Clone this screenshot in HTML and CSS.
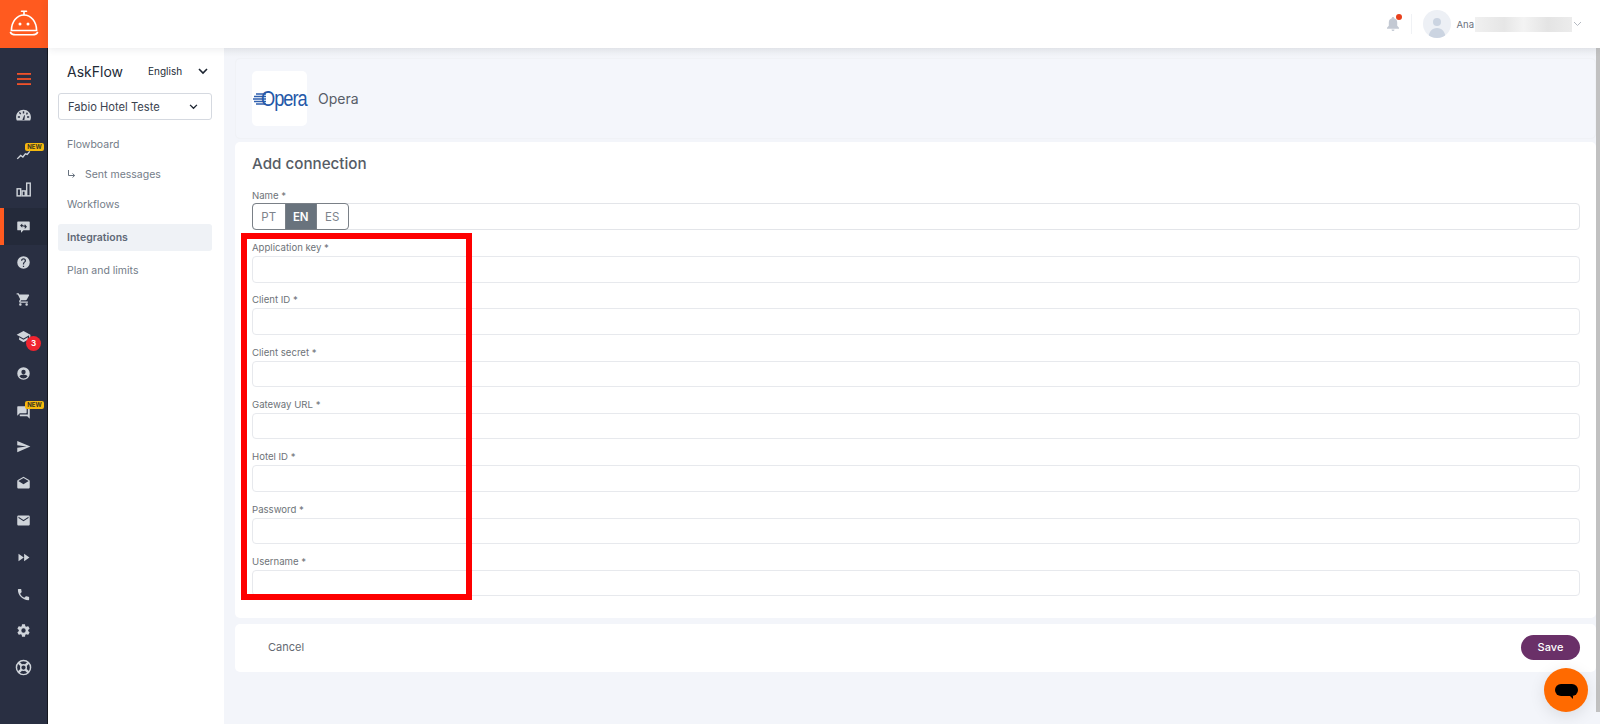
FILE: index.html
```html
<!DOCTYPE html>
<html lang="en">
<head>
  <meta charset="UTF-8" />
  <title>Opera - Add connection</title>
  <link rel="stylesheet" href="styles.css">
</head>
<body>
  <aside class="rail">
    <div class="rail-logo">
      <svg width="32" height="32" viewBox="0 0 32 32" fill="none" stroke="#fff" stroke-width="1.6" stroke-linecap="round">
        <path d="M13.5 3.2h5M16 3.2v3.6"/>
        <path d="M3.4 22.5C3.4 14 8.8 7 16 7s12.6 7 12.6 15.500z"/>
        <path d="M2.500 24.500c1 1.800 3 2.300 5 2.300h17c2 0 4-.5 5-2.300"/>
        <circle cx="12" cy="16" r="1.500" fill="#fff" stroke="none"/>
        <circle cx="20" cy="16" r="1.500" fill="#fff" stroke="none"/>
      </svg>
    </div>
    <nav class="rail-icons">
      <a class="rail-item menu">
        <svg width="16" height="16" viewBox="0 0 16 16" fill="#f0522a"><rect x="1" y="2" width="14" height="1.800"/><rect x="1" y="7.100" width="14" height="1.800"/><rect x="1" y="12.200" width="14" height="1.800"/></svg>
      </a>
      <a class="rail-item big">
        <svg viewBox="0 0 24 24"><path fill-rule="evenodd" d="M12 4C6 4 1.500 8.700 1.500 14.500c0 1.700.4 3.200 1.100 4.500h18.800c.7-1.300 1.100-2.800 1.100-4.500C22.500 8.700 18 4 12 4zM11 6h2v3h-2zM5.500 8.200l1.500-1.200 1.800 2.400-1.500 1.100zM4 13h3v2H4zm13 0h3v2h-3zm-1.500-2.800 1-2.700 1.800.8-1.100 2.700zM10.600 17.500 13 11.500l1 .3-.6 5.900c-.2 1-3 1-2.800-.2z"/></svg>
      </a>
      <a class="rail-item nudge">
        <svg viewBox="0 0 24 24" fill="none" stroke="currentColor" stroke-width="2.200"><path d="M2 19l5.500-5.500 3.500 2.500 4-5 3 1 4-5"/></svg>
        <span class="new-tag">NEW</span>
      </a>
      <a class="rail-item big">
        <svg viewBox="0 0 24 24" fill="none" stroke="currentColor" stroke-width="2"><rect x="3" y="11" width="5" height="10"/><rect x="10" y="14" width="4.500" height="7"/><rect x="16.500" y="3" width="5" height="18"/></svg>
      </a>
      <a class="rail-item active">
        <svg viewBox="0 0 24 24"><path fill-rule="evenodd" d="M3 4h18c.6 0 1 .4 1 1v12c0 .6-.4 1-1 1h-9l-4 4v-4H3c-.6 0-1-.4-1-1V5c0-.6.4-1 1-1zm7 3-3.500 3.500L10 14v-2.500h3V9.500h-3zm4 1v2.500h-3v2h3V16l3.500-3.500z"/></svg>
      </a>
      <a class="rail-item">
        <svg viewBox="0 0 24 24"><path d="M15.070 11.250 14.170 12.170C13.450 12.890 13 13.500 13 15H11V14.500C11 13.390 11.450 12.390 12.170 11.670L13.410 10.410C13.780 10.050 14 9.550 14 9 14 7.890 13.100 7 12 7A2 2 0 0 0 10 9H8A4 4 0 0 1 12 5 4 4 0 0 1 16 9C16 9.880 15.640 10.670 15.070 11.250M13 19H11V17H13M12 2A10 10 0 0 0 2 12 10 10 0 0 0 12 22 10 10 0 0 0 22 12C22 6.470 17.500 2 12 2Z"/></svg>
      </a>
      <a class="rail-item">
        <svg viewBox="0 0 24 24"><path d="M17 18C15.890 18 15 18.890 15 20A2 2 0 0 0 17 22 2 2 0 0 0 19 20C19 18.890 18.100 18 17 18M1 2V4H3L6.600 11.590 5.240 14.040C5.090 14.320 5 14.650 5 15A2 2 0 0 0 7 17H19V15H7.420A.25.25 0 0 1 7.170 14.750C7.170 14.700 7.180 14.660 7.200 14.630L8.100 13H15.550C16.300 13 16.960 12.580 17.300 11.970L20.880 5.500C20.950 5.340 21 5.170 21 5A1 1 0 0 0 20 4H5.210L4.270 2M7 18C5.890 18 5 18.890 5 20A2 2 0 0 0 7 22 2 2 0 0 0 9 20C9 18.890 8.100 18 7 18Z"/></svg>
      </a>
      <a class="rail-item">
        <svg viewBox="0 0 24 24"><path d="M12 3 1 9l11 6 9-4.910V17h2V9M5 13.180v4L12 21l7-3.820v-4L12 17l-7-3.820z"/></svg>
        <span class="count-tag">3</span>
      </a>
      <a class="rail-item">
        <svg viewBox="0 0 24 24"><path fill-rule="evenodd" d="M12 2a10 10 0 1 0 0 20 10 10 0 0 0 0-20zm0 4a3.500 3.500 0 1 1 0 7 3.500 3.500 0 0 1 0-7zm0 14a8 8 0 0 1-6.500-3.300c.1-2 4.300-3.200 6.500-3.200s6.400 1.200 6.500 3.200A8 8 0 0 1 12 20z"/></svg>
      </a>
      <a class="rail-item nudge">
        <svg viewBox="0 0 24 24"><path d="M21 6h-2v9H6v2c0 .55.45 1 1 1h11l4 4V7c0-.55-.45-1-1-1zm-4 6V3c0-.55-.45-1-1-1H3c-.55 0-1 .45-1 1v14l4-4h10c.55 0 1-.45 1-1z"/></svg>
        <span class="new-tag">NEW</span>
      </a>
      <a class="rail-item">
        <svg viewBox="0 0 24 24"><path d="M2.010 21 23 12 2.010 3 2 10l15 2-15 2z"/></svg>
      </a>
      <a class="rail-item">
        <svg viewBox="0 0 24 24"><path d="M21.990 8c0-.72-.37-1.350-.94-1.700L12 1 2.950 6.300C2.380 6.650 2 7.280 2 8v10c0 1.100.9 2 2 2h16c1.100 0 2-.9 2-2l-.01-10zM12 13 3.740 7.840 12 3l8.260 4.840L12 13z"/></svg>
      </a>
      <a class="rail-item">
        <svg viewBox="0 0 24 24"><path d="M20 4H4c-1.100 0-1.990.9-1.990 2L2 18c0 1.100.9 2 2 2h16c1.100 0 2-.9 2-2V6c0-1.100-.9-2-2-2zm0 4-8 5-8-5V6l8 5 8-5v2z"/></svg>
      </a>
      <a class="rail-item">
        <svg viewBox="0 0 24 24"><path d="M4 18l8.500-6L4 6v12zm9-12v12l8.500-6L13 6z"/></svg>
      </a>
      <a class="rail-item">
        <svg viewBox="0 0 24 24"><path d="M6.620 10.790c1.440 2.830 3.760 5.140 6.590 6.590l2.200-2.200c.27-.27.67-.36 1.020-.24 1.120.37 2.330.57 3.570.57.55 0 1 .45 1 1V20c0 .55-.45 1-1 1-9.390 0-17-7.610-17-17 0-.55.45-1 1-1h3.500c.55 0 1 .45 1 1 0 1.250.2 2.450.57 3.570.11.35.03.74-.25 1.020l-2.200 2.200z"/></svg>
      </a>
      <a class="rail-item">
        <svg viewBox="0 0 24 24"><path d="M12 15.500A3.500 3.500 0 0 1 8.500 12 3.500 3.500 0 0 1 12 8.500 3.500 3.500 0 0 1 15.500 12 3.500 3.500 0 0 1 12 15.500M19.430 12.970C19.470 12.650 19.500 12.330 19.500 12 19.500 11.670 19.470 11.340 19.430 11L21.540 9.370C21.730 9.220 21.780 8.950 21.660 8.730L19.660 5.270C19.540 5.050 19.270 4.960 19.050 5.050L16.560 6.050C16.040 5.660 15.500 5.320 14.870 5.070L14.500 2.420C14.460 2.180 14.250 2 14 2H10C9.750 2 9.540 2.180 9.500 2.420L9.130 5.070C8.500 5.320 7.960 5.660 7.440 6.050L4.950 5.050C4.730 4.960 4.460 5.050 4.340 5.270L2.340 8.730C2.210 8.950 2.270 9.220 2.460 9.370L4.570 11C4.530 11.340 4.500 11.670 4.500 12 4.500 12.330 4.530 12.650 4.570 12.970L2.460 14.630C2.270 14.780 2.210 15.050 2.340 15.270L4.340 18.730C4.460 18.950 4.730 19.030 4.950 18.950L7.440 17.940C7.960 18.340 8.500 18.680 9.130 18.930L9.500 21.580C9.540 21.820 9.750 22 10 22H14C14.250 22 14.460 21.820 14.500 21.580L14.870 18.930C15.500 18.670 16.040 18.340 16.560 17.940L19.050 18.950C19.270 19.030 19.540 18.950 19.660 18.730L21.660 15.270C21.780 15.050 21.730 14.780 21.540 14.630L19.430 12.970Z"/></svg>
      </a>
      <a class="rail-item big">
        <svg viewBox="0 0 24 24" fill="none" stroke="currentColor"><circle cx="12" cy="12" r="10" stroke-width="2"/><circle cx="12" cy="12" r="4" stroke-width="2"/><path stroke-width="3.500" d="M5 5l4 4M19 5l-4 4M5 19l4-4M19 19l-4-4"/></svg>
      </a>
    </nav>
  </aside>

  <div class="page">
    <header class="topbar">
      <div class="bell">
        <svg width="14" height="16" viewBox="0 0 14 16" fill="#c3c9d3"><path d="M7 1c-.7 0-1.200.5-1.200 1.200C3.800 2.800 2.800 4.500 2.800 6.500v3.200L1 11.800v1h12v-1l-1.800-2.100V6.500c0-2-1-3.700-3-4.300C8.200 1.500 7.700 1 7 1zM5.500 13.600a1.500 1.500 0 0 0 3 0z"/></svg>
        <span class="bell-dot"></span>
      </div>
      <div class="topbar-sep"></div>
      <div class="avatar">
        <svg width="28" height="28" viewBox="0 0 28 28" fill="#cbd4e1"><circle cx="14" cy="12" r="4"/><path d="M5.500 28c0-6 3.500-10 8.500-10s8.500 4 8.500 10z"/></svg>
      </div>
      <span class="user-name">Ana</span>
      <span class="user-blur"></span>
      <svg class="user-caret" width="9" height="6" viewBox="0 0 9 6" fill="none" stroke="#b5bac2" stroke-width="1"><path d="M1 1l3.500 3.500L8 1"/></svg>
    </header>

    <div class="body-row">
      <aside class="subnav">
        <div class="subnav-head">
          <span class="subnav-title">AskFlow</span>
          <span class="lang">English</span>
          <svg class="chev" width="10" height="7" viewBox="0 0 10 7" fill="none" stroke="#1c2430" stroke-width="1.600"><path d="M1 1l4 4 4-4"/></svg>
        </div>
        <div class="hotel-select">
          <span>Fabio Hotel Teste</span>
          <svg width="9" height="6" viewBox="0 0 10 7" fill="none" stroke="#1c2430" stroke-width="1.500"><path d="M1 1l4 4 4-4"/></svg>
        </div>
        <ul class="subnav-list">
          <li>Flowboard</li>
          <li class="sub">
            <svg width="10" height="10" viewBox="0 0 10 10" fill="none" stroke="#68727f" stroke-width="1"><path d="M1.500 1v5.500h6M5.500 4.500l2.200 2-2.200 2"/></svg>
            Sent messages
          </li>
          <li>Workflows</li>
          <li class="current">Integrations</li>
          <li>Plan and limits</li>
        </ul>
      </aside>

      <main class="content">
        <section class="app-head">
          <div class="app-logo">
            <svg width="14" height="14" viewBox="0 0 14 14" stroke="#2f5fae" stroke-width="1.300"><path d="M3 2h10M1 4.500h12M0 7h13M1 9.500h12M3 12h10"/></svg>
            <span class="app-logo-text">Opera</span>
          </div>
          <h1 class="app-name">Opera</h1>
        </section>

        <section class="card form-card">
          <h2 class="card-title">Add connection</h2>

          <div class="name-field">
            <label>Name *</label>
            <div class="lang-input">
              <div class="lang-tabs">
                <span>PT</span>
                <span class="on">EN</span>
                <span>ES</span>
              </div>
            </div>
          </div>

          <div class="field"><label>Application key *</label><input type="text" /></div>
          <div class="field"><label>Client ID *</label><input type="text" /></div>
          <div class="field"><label>Client secret *</label><input type="text" /></div>
          <div class="field"><label>Gateway URL *</label><input type="text" /></div>
          <div class="field"><label>Hotel ID *</label><input type="text" /></div>
          <div class="field"><label>Password *</label><input type="text" /></div>
          <div class="field"><label>Username *</label><input type="text" /></div>
        </section>

        <section class="card actions">
          <button class="btn-cancel">Cancel</button>
          <button class="btn-save">Save</button>
        </section>
      </main>

      <div class="scrollbar"></div>
    </div>
  </div>

  <div class="annotation"></div>

  <div class="chat-fab">
    <span class="chat-pill"></span>
    <span class="chat-tail"></span>
  </div>
</body>
</html>
```

FILE: styles.css
```css
* {
  box-sizing: border-box;
}

body {
  font-family: Inter, "Liberation Sans", sans-serif;
  background: #f3f5fa;
  margin: 0;
  height: 100vh;
  overflow: hidden;
  display: flex;
}

/* left icon rail */
.rail {
  width: 48px;
  flex: none;
  background: #292f42;
  border-right: 1px solid #14171f;
  color: #cfd4da;
}

.rail-logo {
  height: 48px;
  width: 48px;
  background: #ff5a1f;
  display: flex;
  align-items: center;
  justify-content: center;
}

.rail-icons {
  padding-top: 12.6px;
}

.rail-item {
  height: 36.8px;
  display: flex;
  align-items: center;
  justify-content: center;
  position: relative;
}

.rail-item svg {
  width: 15px;
  height: 15px;
  fill: currentColor;
}

.rail-item svg[fill="none"] {
  fill: none;
}

.rail-item.menu svg {
  width: 16px;
  height: 16px;
  fill: #f0522a;
}

.rail-item.big svg {
  width: 17px;
  height: 17px;
}

.rail-item.nudge svg {
  transform: translateY(2px);
}

.rail-item.active {
  background: #242a3a;
  border-left: 4px solid #ff5a1f;
  padding-right: 4px;
}

.new-tag {
  position: absolute;
  left: 25px;
  top: 9px;
  width: 19px;
  height: 8px;
  border-radius: 2px;
  background: #f5b90f;
  color: #3a3320;
  font-size: 6px;
  font-weight: 700;
  line-height: 8px;
  text-align: center;
}

.count-tag {
  position: absolute;
  left: 26px;
  top: 18px;
  width: 15px;
  height: 15px;
  border-radius: 50%;
  background: #f0242f;
  color: #fff;
  font-size: 8px;
  font-weight: 700;
  line-height: 15px;
  text-align: center;
}

.page {
  flex: 1;
  min-width: 0;
  display: flex;
  flex-direction: column;
}

/* top bar */
.topbar {
  height: 48px;
  flex: none;
  background: #fff;
  box-shadow: 0 1px 8px rgba(40, 50, 70, 0.1);
  position: relative;
  z-index: 2;
  display: flex;
  align-items: center;
  justify-content: flex-end;
  padding-right: 18px;
}

.bell {
  position: relative;
  height: 16px;
  margin-right: 11px;
}

.bell-dot {
  position: absolute;
  right: -2px;
  top: -2px;
  width: 6px;
  height: 6px;
  border-radius: 50%;
  background: #e8401c;
}

.topbar-sep {
  width: 1px;
  height: 20px;
  background: #f0f2f5;
  margin-right: 11px;
}

.avatar {
  width: 28px;
  height: 28px;
  border-radius: 50%;
  background: #edf0f5;
  overflow: hidden;
  margin-right: 5px;
}

.user-name {
  font-size: 9.5px;
  color: #6c7280;
  margin-right: 1px;
}

.user-blur {
  width: 97px;
  height: 15px;
  background: linear-gradient(90deg, #f0f0f0, #e6e6e6 30%, #f3f3f3 50%, #e4e4e4 75%, #ececec);
}

.user-caret {
  margin-left: 1px;
}

.body-row {
  flex: 1;
  min-height: 0;
  display: flex;
}

/* second column */
.subnav {
  width: 176px;
  flex: none;
  background: #fff;
  padding: 0 12px 0 10px;
}

.subnav-head {
  height: 45px;
  display: flex;
  align-items: center;
  padding: 2px 4px 0 9px;
}

.subnav-title {
  font-size: 14px;
  font-weight: 400;
  color: #222a36;
  width: 81px;
}

.lang {
  font-size: 10px;
  color: #222a36;
  flex: 1;
  margin-top: -2px;
}

.chev {
  margin-top: -1px;
}

.hotel-select {
  height: 27px;
  border: 1px solid #d5d9e0;
  border-radius: 3px;
  display: flex;
  align-items: center;
  justify-content: space-between;
  padding: 0 13px 0 9px;
  font-size: 11.2px;
  color: #3b4350;
}

.subnav-list {
  list-style: none;
  margin: 9px 0 0;
  padding: 0;
  font-size: 10.5px;
  color: #737c88;
}

.subnav-list li {
  height: 30px;
  display: flex;
  align-items: center;
  padding-left: 9px;
}

.subnav-list .sub {
  gap: 8px;
}

.subnav-list .current {
  height: 27px;
  margin-top: 5px;
  margin-bottom: 4px;
  background: #eff2f6;
  border-radius: 3px;
  font-weight: 600;
  color: #5f6977;
}

/* main column */
.content {
  flex: 1;
  min-width: 0;
  padding: 10px 0 0 11px;
  background: linear-gradient(#eef0f4, #f3f5fa 10px);
}

.app-head {
  height: 81px;
  margin-bottom: 3px;
  background: #f4f6fb;
  border: 1px solid #f0f2f6;
  border-radius: 5px;
  display: flex;
  align-items: center;
  padding-left: 16px;
}

.app-logo {
  width: 55px;
  height: 55px;
  background: #fff;
  border-radius: 5px;
  display: flex;
  align-items: center;
  justify-content: center;
  margin-right: 11px;
}

.app-logo svg {
  margin: 0 -6px 0 -2px;
}

.app-logo-text {
  font-family: "Liberation Sans", sans-serif;
  font-size: 22px;
  letter-spacing: -1.2px;
  color: #2458a8;
  transform: scaleX(0.83);
  transform-origin: left center;
  width: 43px;
}

.app-name {
  margin: 0;
  font-size: 14px;
  font-weight: 400;
  color: #575d68;
}

.card {
  background: #fff;
  border-radius: 5px;
}

.form-card {
  height: 476px;
  padding: 12px 16px 0 17px;
}

.card-title {
  margin: 0;
  font-size: 15.2px;
  font-weight: 500;
  line-height: 20px;
  color: #565c65;
}

label {
  display: block;
  font-size: 9.6px;
  line-height: 12px;
  color: #6e7378;
}

.name-field {
  margin-top: 16px;
}

.lang-input {
  height: 27px;
  border: 1px solid #e3e5e9;
  border-radius: 4px;
  margin-top: 1px;
}

.lang-tabs {
  display: inline-flex;
  height: 27px;
  margin: -1px;
  border: 1px solid #7a8087;
  border-radius: 4px;
  overflow: hidden;
  font-size: 11.5px;
  color: #7d838b;
}

.lang-tabs span {
  width: 31.500px;
  display: flex;
  align-items: center;
  justify-content: center;
  border-left: 1px solid #7a8087;
}

.lang-tabs span:first-child {
  border-left: none;
}

.lang-tabs .on {
  background: #69737d;
  color: #fff;
  font-weight: 600;
}

.field {
  height: 52.33px;
  padding-top: 12px;
}

.field label {
  margin-bottom: 2px;
}

.field input {
  display: block;
  width: 100%;
  height: 26.5px;
  border: 1px solid #e7e9ed;
  border-radius: 4px;
  background: #fff;
}

.actions {
  height: 48px;
  margin-top: 6px;
  display: flex;
  align-items: center;
  justify-content: space-between;
  padding: 0 16px 2px 17px;
}

.btn-cancel {
  border: none;
  background: none;
  font: inherit;
  font-size: 11px;
  color: #646a72;
  padding: 0 16px;
}

.btn-save {
  width: 59px;
  height: 25px;
  border: none;
  border-radius: 13px;
  background: #6a3068;
  color: #fff;
  font: inherit;
  font-size: 11px;
  font-weight: 500;
}

.scrollbar {
  width: 4px;
  flex: none;
  background: #c1c1c1;
  margin-bottom: 12px;
}

/* red box someone drew on the screenshot */
.annotation {
  position: absolute;
  left: 241px;
  top: 233px;
  width: 231px;
  height: 367px;
  border: 6px solid #fe0000;
}

.chat-fab {
  position: absolute;
  left: 1544px;
  top: 668px;
  width: 44px;
  height: 44px;
  border-radius: 50%;
  background: #ff6a00;
  box-shadow: 0 4px 16px rgba(0, 0, 0, 0.1);
}

.chat-pill {
  position: absolute;
  left: 11px;
  top: 16px;
  width: 23px;
  height: 12px;
  border-radius: 6px;
  background: #000;
}

.chat-tail {
  position: absolute;
  left: 26px;
  top: 28px;
  border-top: 3px solid #000;
  border-left: 3px solid transparent;
}
```
